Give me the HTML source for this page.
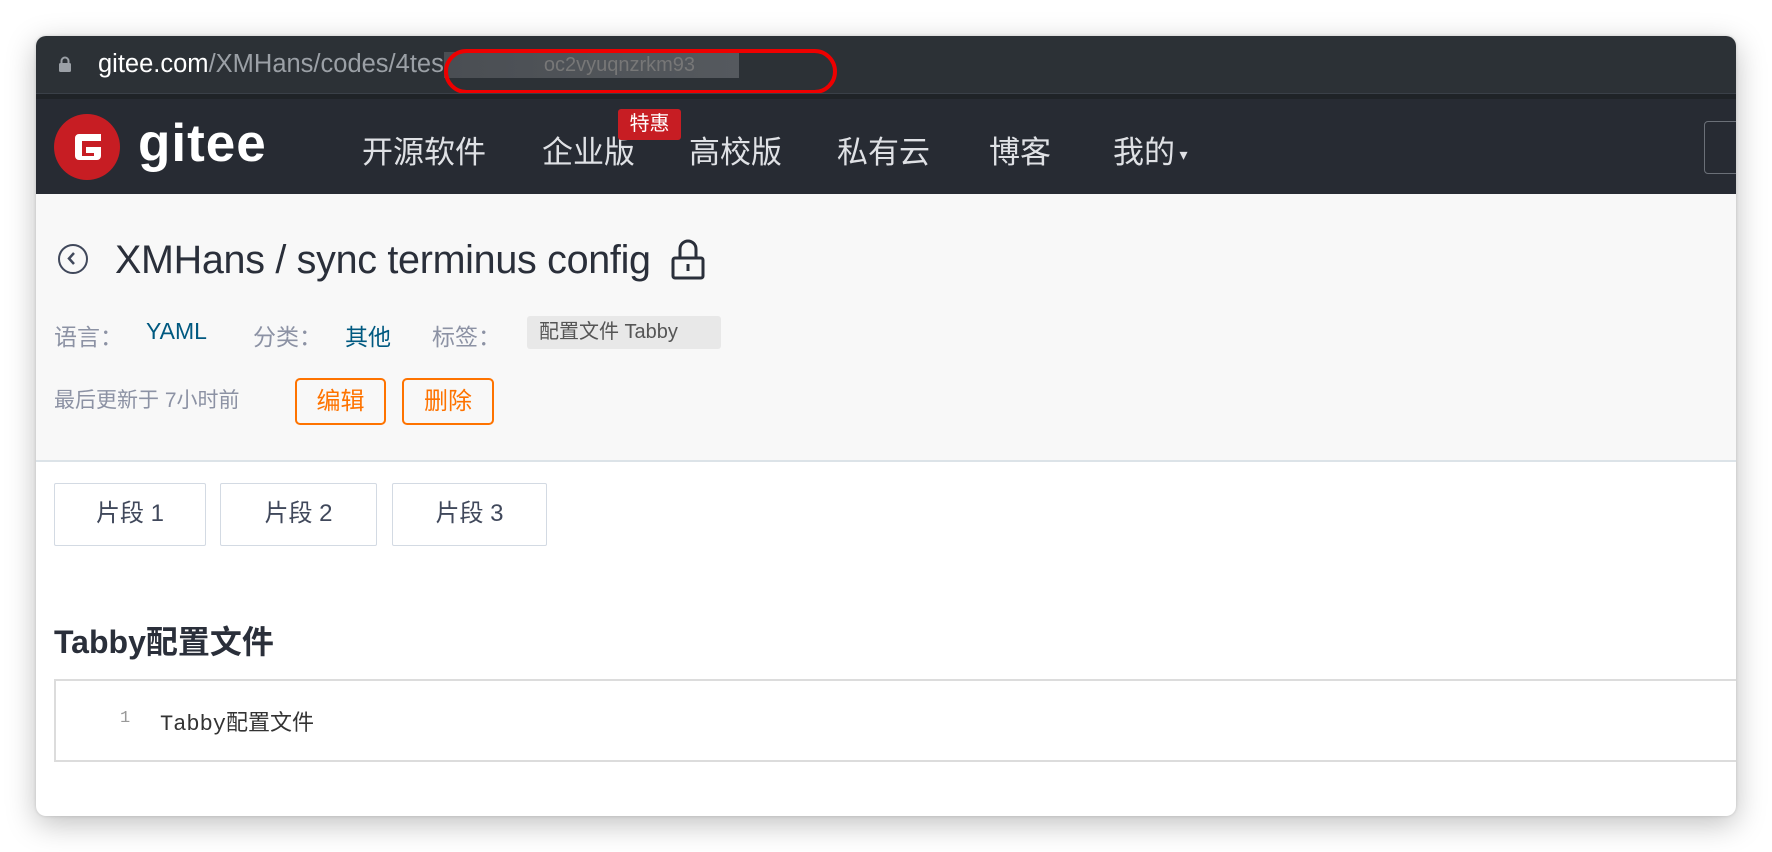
<!DOCTYPE html>
<html><head><meta charset="utf-8"><style>
*{margin:0;padding:0;box-sizing:border-box}
body{width:1772px;height:852px;background:#fff;position:relative;overflow:hidden;font-family:"Liberation Sans","Noto Sans CJK SC",sans-serif}
.win{position:absolute;left:36px;top:36px;width:1700px;height:780px;border-radius:10px;overflow:hidden;background:#fff;box-shadow:0 8px 30px rgba(0,0,0,.25),0 0 3px rgba(0,0,0,.15)}
.addr{position:absolute;left:0;top:0;width:100%;height:57px;background:#2c3136}
.addr .url{position:absolute;left:62px;top:14px;font-size:25.5px;color:#9ba0a6;white-space:nowrap}
.addr .url b{font-weight:normal;color:#fff}
.lock{position:absolute;left:22px;top:20px;width:14px;height:16px}
.blur{display:inline-block;width:295px;height:26px;background:linear-gradient(90deg,#4a4e53,#55595e);vertical-align:middle;color:#777;font-size:20px;line-height:26px;padding-left:100px}
.oval{position:absolute;left:408px;top:13px;width:393px;height:45px;border:4px solid #e00;border-radius:24px}
.sep{position:absolute;left:0;top:57px;width:100%;height:6px;background:#1f2327;border-top:1px solid #3a4048}
.nav{position:absolute;left:0;top:63px;width:100%;height:95px;background:#272b33}
.logo{position:absolute;left:18px;top:15px;width:66px;height:66px;border-radius:50%;background:#c71d23}
.gitee{position:absolute;left:102px;top:14px;font-size:53px;font-weight:bold;color:#fff;letter-spacing:1px}
.ni{position:absolute;top:28px;font-size:31px;color:#dfe1e5}
.badge{position:absolute;left:582px;top:10px;width:63px;height:31px;background:#c71d23;color:#fff;font-size:20px;text-align:center;line-height:31px;border-radius:3px}
.search{position:absolute;left:1668px;top:22px;width:60px;height:53px;border:1px solid #6b7078;border-radius:4px}
.head{position:absolute;left:0;top:158px;width:100%;height:268px;background:#f8f8f8;border-bottom:2px solid #dce3e8}
.back{position:absolute;left:22px;top:50px;width:30px;height:30px;border:2.5px solid #40485b;border-radius:50%}
.title{position:absolute;left:79px;top:44px;font-size:39.5px;color:#2a2f3a;letter-spacing:-0.3px}
.meta{position:absolute;top:124px;font-size:23px;color:#8c92a4}
.blue{color:#005980}
.tag{position:absolute;left:491px;top:122px;width:194px;height:33px;background:#e8e8e8;border-radius:3px;font-size:20px;color:#555;line-height:33px;padding-left:12px}
.upd{position:absolute;left:18px;top:190px;font-size:21px;color:#8c92a4}
.btn{position:absolute;top:184px;height:47px;border:2px solid #fe7300;border-radius:5px;color:#fe7300;font-size:24px;text-align:center;line-height:43px}
.tab{position:absolute;top:447px;height:63px;border:1.5px solid #d3dae3;border-radius:2px;background:#fff;font-size:24px;color:#40485b;text-align:center;line-height:60px}
.h2{position:absolute;left:18px;top:581px;font-size:32px;font-weight:bold;color:#2a2f3a}
.code{position:absolute;left:18px;top:643px;width:1700px;height:83px;border:2px solid #dcdcdc;border-right:none;background:#fff}
.ln{position:absolute;left:64px;top:28px;font-size:17px;color:#999;font-family:"Liberation Mono",monospace}
.ct{position:absolute;left:104px;top:24px;font-size:22px;color:#333;font-family:"Liberation Mono","Noto Sans CJK SC",monospace}
</style></head><body>
<div class="win">
 <div class="addr">
  <svg class="lock" viewBox="0 0 14 16"><path d="M3.5 7V5a3.5 3.5 0 0 1 7 0v2" stroke="#9ba0a6" stroke-width="2" fill="none"/><rect x="1" y="7" width="12" height="9" rx="1.5" fill="#9ba0a6"/></svg>
  <div class="url"><b>gitee.com</b>/XMHans/codes/4tes<span class="blur">oc2vyuqnzrkm93</span></div>
  <div class="oval"></div>
 </div>
 <div class="sep"></div>
 <div class="nav">
  <div class="logo"><svg width="66" height="66" viewBox="0 0 66 66"><path d="M47 20H25a4 4 0 0 0-4 4v18a4 4 0 0 0 4 4h18a4 4 0 0 0 4-4v-9H32v6h8v3H28V27h19z" fill="#fff"/></svg></div>
  <div class="gitee">gitee</div>
  <div class="ni" style="left:326px">开源软件</div>
  <div class="ni" style="left:506px">企业版</div>
  <div class="badge">特惠</div>
  <div class="ni" style="left:653px">高校版</div>
  <div class="ni" style="left:801px">私有云</div>
  <div class="ni" style="left:953px">博客</div>
  <div class="ni" style="left:1077px">我的<span style="font-size:16px;vertical-align:middle"> ▾</span></div>
  <div class="search"></div>
 </div>
 <div class="head">
  <div class="back"><svg width="25" height="25" viewBox="0 0 25 25" style="position:absolute;left:0;top:0"><path d="M14 7l-5 5.5 5 5.5" stroke="#40485b" stroke-width="2.5" fill="none"/></svg></div>
  <div class="title">XMHans / sync terminus config</div>
  <svg style="position:absolute;left:634px;top:44px" width="36" height="42" viewBox="0 0 36 42"><path d="M10 20V11a8 8 0 0 1 16 0v9" stroke="#2a2f3a" stroke-width="3" fill="none"/><rect x="3" y="20" width="30" height="20" rx="2" stroke="#2a2f3a" stroke-width="3" fill="none"/><path d="M18 26v7" stroke="#2a2f3a" stroke-width="3"/></svg>
  <div class="meta" style="left:18px">语言：</div>
  <div class="meta blue" style="left:110px">YAML</div>
  <div class="meta" style="left:217px">分类：</div>
  <div class="meta blue" style="left:309px">其他</div>
  <div class="meta" style="left:396px">标签：</div>
  <div class="tag">配置文件 Tabby</div>
  <div class="upd">最后更新于 7小时前</div>
  <div class="btn" style="left:259px;width:91px">编辑</div>
  <div class="btn" style="left:366px;width:92px">删除</div>
 </div>
 <div class="tab" style="left:18px;width:152px">片段 1</div>
 <div class="tab" style="left:184px;width:157px">片段 2</div>
 <div class="tab" style="left:356px;width:155px">片段 3</div>
 <div class="h2">Tabby配置文件</div>
 <div class="code"><div class="ln">1</div><div class="ct">Tabby配置文件</div></div>
</div>
</body></html>
